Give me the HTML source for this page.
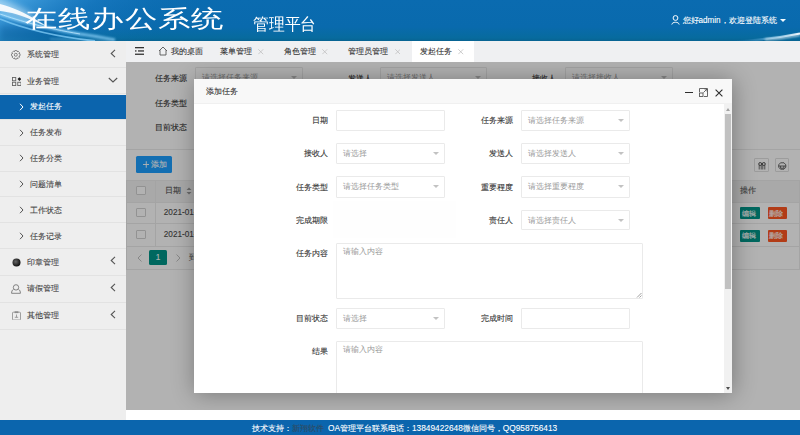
<!DOCTYPE html>
<html><head><meta charset="utf-8">
<style>
*{margin:0;padding:0;box-sizing:border-box}
html,body{width:800px;height:435px;overflow:hidden;background:#fff;font-family:"Liberation Sans",sans-serif;color:#333}
.a{position:absolute;white-space:nowrap}
.t{font-size:8.2px;line-height:10px;-webkit-text-stroke:0.1px currentColor}
#header{position:absolute;left:0;top:0;width:800px;height:41px;overflow:hidden;
  background:linear-gradient(180deg,#0a6bb0 0%,#096aad 65%,#076b9e 92%,#076392 100%)}
#tabs{position:absolute;left:126px;top:41px;width:674px;height:21px;background:#eff0f2}
#side{position:absolute;left:0;top:41px;width:126px;height:379px;background:#eeeeee}
#content{position:absolute;left:126px;top:62px;width:674px;height:348px;background:#fff;overflow:hidden}
#shade{position:absolute;left:0;top:0;width:674px;height:348px;background:rgba(0,0,0,0.3)}
#footer{position:absolute;left:0;top:420px;width:800px;height:15px;background:#0b65ad}
#modal{position:absolute;left:68px;top:17px;width:538px;height:313.5px;background:#fff;box-shadow:1px 1px 22px rgba(0,0,0,.33);overflow:hidden}
.sel{position:absolute;height:21px;border:1px solid #eaeaea;background:#fff;border-radius:1px}
.sel .ph{position:absolute;left:6px;top:5px;font-size:8.2px;line-height:10px;color:#999;white-space:nowrap}
.sel .ar{position:absolute;right:5px;top:8px;width:0;height:0;border-left:3.3px solid transparent;border-right:3.3px solid transparent;border-top:3.5px solid #c2c2c2}
.lbl{position:absolute;font-size:8.2px;line-height:10px;color:#333;white-space:nowrap;text-align:right;-webkit-text-stroke:0.1px currentColor}
.srow{position:absolute;left:0;width:126px;height:26px}
.sline{position:absolute;left:0;width:126px;height:1px;background:#e2e2e2}
.stext{position:absolute;font-size:8.2px;line-height:10px;color:#444;white-space:nowrap;-webkit-text-stroke:0.1px currentColor}
</style></head><body>

<!-- HEADER -->
<div id="header">
  <svg width="800" height="41" style="position:absolute;left:0;top:0">
    <defs>
      <linearGradient id="lg1" x1="0" y1="0" x2="1" y2="0.3">
        <stop offset="0" stop-color="#5ab4ee" stop-opacity="0.85"/>
        <stop offset="0.45" stop-color="#2a8ad4" stop-opacity="0.35"/>
        <stop offset="1" stop-color="#0b68ad" stop-opacity="0"/>
      </linearGradient>
      <linearGradient id="lg2" x1="0" y1="0" x2="1" y2="0">
        <stop offset="0" stop-color="#0b68ad" stop-opacity="0"/>
        <stop offset="0.6" stop-color="#8fd0f5" stop-opacity="0.6"/>
        <stop offset="1" stop-color="#ffffff" stop-opacity="0.95"/>
      </linearGradient>
      <linearGradient id="lg3" x1="0" y1="0" x2="1" y2="0">
        <stop offset="0" stop-color="#ffffff" stop-opacity="0.95"/>
        <stop offset="0.5" stop-color="#d8f0ff" stop-opacity="0.7"/>
        <stop offset="1" stop-color="#9fd6f7" stop-opacity="0"/>
      </linearGradient>
      <linearGradient id="lg4" x1="0" y1="0" x2="1" y2="0">
        <stop offset="0" stop-color="#9fd8fa" stop-opacity="0.8"/>
        <stop offset="0.6" stop-color="#7cc4f0" stop-opacity="0.5"/>
        <stop offset="1" stop-color="#7cc4f0" stop-opacity="0"/>
      </linearGradient>
      <filter id="bl1" x="-20%" y="-50%" width="140%" height="200%"><feGaussianBlur stdDeviation="1.2"/></filter>
      <filter id="bl3" x="-50%" y="-100%" width="200%" height="300%"><feGaussianBlur stdDeviation="3"/></filter>
      <filter id="bl2" x="-20%" y="-50%" width="140%" height="200%"><feGaussianBlur stdDeviation="0.5"/></filter>
    </defs>
    <rect x="0" y="0" width="200" height="41" fill="url(#lg1)"/>
    <rect x="0" y="26" width="60" height="15" fill="#06508e" opacity="0.35" filter="url(#bl3)"/>
    <ellipse cx="10" cy="9" rx="28" ry="6" transform="rotate(24 10 9)" fill="#e0f4ff" opacity="0.55" filter="url(#bl3)"/>
    <path d="M0 4 C12 7 24 12 40 22 C50 28 45 26 36 22 C22 15 10 12 0 11 Z" fill="#ffffff" opacity="0.9" filter="url(#bl2)"/>
    <path d="M0 14 C20 21 45 28 80 34 C95 36 105 38 115 40" stroke="#8ed3fa" stroke-width="3.2" fill="none" opacity="0.75" filter="url(#bl1)"/>
    <path d="M0 14 C20 21 45 28 80 34" stroke="#c8ecff" stroke-width="1" fill="none" opacity="0.7" filter="url(#bl2)"/>
    <path d="M0 19 C22 28 50 36 95 41" stroke="#7cc8f4" stroke-width="1.8" fill="none" opacity="0.8" filter="url(#bl2)"/>
    <path d="M50 39 C70 39.5 90 40.5 110 41.5" stroke="#9fdcff" stroke-opacity="0.35" stroke-width="1.5" fill="none" filter="url(#bl1)"/>
    <path d="M730 41.5 C755 40.5 778 38 800 33.5" stroke="url(#lg2)" stroke-width="2.2" fill="none" filter="url(#bl2)"/>
    <path d="M765 39.5 C780 38.5 790 37 800 35" stroke="#ffffff" stroke-opacity="0.85" stroke-width="1.6" fill="none" filter="url(#bl1)"/>
  </svg>
  <div class="a" style="left:25px;top:4.5px;font-size:24px;line-height:28px;color:#fff;letter-spacing:0.6px;transform:scaleX(1.35);transform-origin:0 0">在线办公系统</div>
  <div class="a" style="left:252.5px;top:14px;font-size:16.5px;line-height:20px;color:#fff;transform:scaleX(0.93);transform-origin:0 0">管理平台</div>
  <svg class="a" style="left:671px;top:15px" width="9" height="10" viewBox="0 0 9 10">
    <circle cx="4.5" cy="3" r="2.4" stroke="#fff" stroke-width="1" fill="none"/>
    <path d="M0.8 9.5 C1.2 6.5 7.8 6.5 8.2 9.5" stroke="#fff" stroke-width="1" fill="none"/>
  </svg>
  <div class="a t" style="left:682.5px;top:15.5px;color:#fff;font-size:8.15px">您好admin，欢迎登陆系统</div>
  <div class="a" style="left:780px;top:19.3px;width:0;height:0;border-left:3.2px solid transparent;border-right:3.2px solid transparent;border-top:3.4px solid #f4fbff"></div>
</div>

<!-- TABS -->
<div id="tabs">
  <svg class="a" style="left:9px;top:6.1px" width="9" height="8" viewBox="0 0 9 8">
    <rect x="0" y="0" width="9" height="1.3" fill="#333"/>
    <rect x="3" y="3.3" width="6" height="1.3" fill="#333"/>
    <rect x="0" y="3.3" width="1.5" height="1.3" fill="#333"/>
    <rect x="0" y="6.6" width="9" height="1.3" fill="#333"/>
  </svg>
  <svg class="a" style="left:32px;top:4.5px" width="10" height="10" viewBox="0 0 10 10">
    <path d="M1 5 L5 1 L9 5 M2 4.2 V9 H8 V4.2" stroke="#555" stroke-width="0.9" fill="none"/>
  </svg>
  <div class="a t" style="left:44.5px;top:6px">我的桌面</div>
  <div class="a t" style="left:93.5px;top:6px">菜单管理</div>
  <svg class="a" style="left:132.25px;top:8.2px" width="5.5" height="5.5" viewBox="0 0 5.5 5.5"><path d="M0.3 0.3 L5.2 5.2 M5.2 0.3 L0.3 5.2" stroke="#bdbdbd" stroke-width="0.75"/></svg>
  <div class="a t" style="left:157.5px;top:6px">角色管理</div>
  <svg class="a" style="left:196.00px;top:8.2px" width="5.5" height="5.5" viewBox="0 0 5.5 5.5"><path d="M0.3 0.3 L5.2 5.2 M5.2 0.3 L0.3 5.2" stroke="#bdbdbd" stroke-width="0.75"/></svg>
  <div class="a t" style="left:222px;top:6px">管理员管理</div>
  <svg class="a" style="left:268.50px;top:8.2px" width="5.5" height="5.5" viewBox="0 0 5.5 5.5"><path d="M0.3 0.3 L5.2 5.2 M5.2 0.3 L0.3 5.2" stroke="#bdbdbd" stroke-width="0.75"/></svg>
  <div class="a" style="left:285.8px;top:0;width:62px;height:21px;background:#fff"></div>
  <div class="a t" style="left:293.5px;top:6px">发起任务</div>
  <svg class="a" style="left:332.25px;top:8.2px" width="5.5" height="5.5" viewBox="0 0 5.5 5.5"><path d="M0.3 0.3 L5.2 5.2 M5.2 0.3 L0.3 5.2" stroke="#bdbdbd" stroke-width="0.75"/></svg>
</div>

<!-- SIDEBAR -->
<div id="side">
<div class="sline" style="top:26px"></div>
<div class="sline" style="top:52px"></div>
<div class="sline" style="top:78px"></div>
<div class="sline" style="top:104px"></div>
<div class="sline" style="top:130px"></div>
<div class="sline" style="top:155px"></div>
<div class="sline" style="top:181px"></div>
<div class="sline" style="top:207px"></div>
<div class="sline" style="top:234px"></div>
<div class="sline" style="top:261px"></div>
<div class="sline" style="top:288px"></div>
<div class="a" style="left:0;top:53.5px;width:126px;height:24.5px;background:#0b64ad"></div>
<div class="stext" style="left:26.5px;top:9.4px">系统管理</div>
<svg class="a" style="left:110px;top:7.6px" width="6" height="9" viewBox="0 0 6 9"><path d="M5 0.8 L1.2 4.5 L5 8.2" stroke="#555" stroke-width="1.1" fill="none"/></svg>
<div class="stext" style="left:26.5px;top:35.8px">业务管理</div>
<svg class="a" style="left:108px;top:35.6px" width="10" height="6" viewBox="0 0 10 6"><path d="M0.8 1 L5 5 L9.2 1" stroke="#555" stroke-width="1.1" fill="none"/></svg>
<div class="stext" style="left:26.5px;top:216.8px">印章管理</div>
<svg class="a" style="left:110px;top:215.0px" width="6" height="9" viewBox="0 0 6 9"><path d="M5 0.8 L1.2 4.5 L5 8.2" stroke="#555" stroke-width="1.1" fill="none"/></svg>
<div class="stext" style="left:26.5px;top:243.4px">请假管理</div>
<svg class="a" style="left:110px;top:241.6px" width="6" height="9" viewBox="0 0 6 9"><path d="M5 0.8 L1.2 4.5 L5 8.2" stroke="#555" stroke-width="1.1" fill="none"/></svg>
<div class="stext" style="left:26.5px;top:270.3px">其他管理</div>
<svg class="a" style="left:110px;top:268.5px" width="6" height="9" viewBox="0 0 6 9"><path d="M5 0.8 L1.2 4.5 L5 8.2" stroke="#555" stroke-width="1.1" fill="none"/></svg>
<div class="stext" style="left:30px;top:61.0px;color:#fff">发起任务</div>
<svg class="a" style="left:18.5px;top:61.5px" width="5" height="8" viewBox="0 0 5 8"><path d="M1 0.8 L4 4 L1 7.2" stroke="#fff" stroke-width="1" fill="none"/></svg>
<div class="stext" style="left:30px;top:87.2px;color:#444">任务发布</div>
<svg class="a" style="left:18.5px;top:87.7px" width="5" height="8" viewBox="0 0 5 8"><path d="M1 0.8 L4 4 L1 7.2" stroke="#555" stroke-width="1" fill="none"/></svg>
<div class="stext" style="left:30px;top:112.5px;color:#444">任务分类</div>
<svg class="a" style="left:18.5px;top:113.0px" width="5" height="8" viewBox="0 0 5 8"><path d="M1 0.8 L4 4 L1 7.2" stroke="#555" stroke-width="1" fill="none"/></svg>
<div class="stext" style="left:30px;top:138.5px;color:#444">问题清单</div>
<svg class="a" style="left:18.5px;top:139.0px" width="5" height="8" viewBox="0 0 5 8"><path d="M1 0.8 L4 4 L1 7.2" stroke="#555" stroke-width="1" fill="none"/></svg>
<div class="stext" style="left:30px;top:164.5px;color:#444">工作状态</div>
<svg class="a" style="left:18.5px;top:165.0px" width="5" height="8" viewBox="0 0 5 8"><path d="M1 0.8 L4 4 L1 7.2" stroke="#555" stroke-width="1" fill="none"/></svg>
<div class="stext" style="left:30px;top:190.5px;color:#444">任务记录</div>
<svg class="a" style="left:18.5px;top:191.0px" width="5" height="8" viewBox="0 0 5 8"><path d="M1 0.8 L4 4 L1 7.2" stroke="#555" stroke-width="1" fill="none"/></svg>
<svg class="a" style="left:11.2px;top:9.2px" width="9.6" height="9.6" viewBox="0 0 11 11">
 <circle cx="5.5" cy="5.5" r="1.7" stroke="#666" stroke-width="0.9" fill="none"/>
 <path d="M9.06 3.91 L10.38 4.41 L10.38 6.59 L9.06 7.09 L9.14 6.89 L9.72 8.18 L8.18 9.72 L6.89 9.14 L7.09 9.06 L6.59 10.38 L4.41 10.38 L3.91 9.06 L4.11 9.14 L2.82 9.72 L1.28 8.18 L1.86 6.89 L1.94 7.09 L0.62 6.59 L0.62 4.41 L1.94 3.91 L1.86 4.11 L1.28 2.82 L2.82 1.28 L4.11 1.86 L3.91 1.94 L4.41 0.62 L6.59 0.62 L7.09 1.94 L6.89 1.86 L8.18 1.28 L9.72 2.82 L9.14 4.11 Z" stroke="#666" stroke-width="0.85" fill="none" stroke-linejoin="round"/>
</svg>
<svg class="a" style="left:11.5px;top:35.5px" width="9.5" height="9" viewBox="0 0 9.5 9">
 <rect x="0.45" y="0.45" width="3.3" height="3.3" stroke="#666" stroke-width="0.9" fill="none"/>
 <rect x="0.45" y="5.25" width="3.3" height="3.3" stroke="#666" stroke-width="0.9" fill="none"/>
 <rect x="5.75" y="5.25" width="3.3" height="3.3" stroke="#666" stroke-width="0.9" fill="none"/>
 <path d="M7.4 0.2 L9.3 2.1 L7.4 4 L5.5 2.1 Z" fill="#222"/>
</svg>
<svg class="a" style="left:11.5px;top:216.5px" width="9" height="9" viewBox="0 0 9 9">
 <defs><radialGradient id="rg1" cx="0.4" cy="0.4" r="0.6"><stop offset="0" stop-color="#666"/><stop offset="1" stop-color="#111"/></radialGradient></defs>
 <circle cx="4.5" cy="4.5" r="4" fill="url(#rg1)"/>
</svg>
<svg class="a" style="left:10.8px;top:242.5px" width="10" height="10" viewBox="0 0 10 10">
 <circle cx="5" cy="3.4" r="2.7" stroke="#707070" stroke-width="0.85" fill="none"/>
 <path d="M2.6 5.2 C1.2 6 0.6 7.3 0.6 9.3 H9.4 C9.4 7.3 8.8 6 7.4 5.2" stroke="#707070" stroke-width="0.85" fill="none"/>
</svg>
<svg class="a" style="left:11.8px;top:269.8px" width="9" height="9.5" viewBox="0 0 9 9.5">
 <rect x="0.5" y="1.2" width="8" height="7.8" rx="0.8" stroke="#8c8c8c" stroke-width="0.8" fill="none"/>
 <rect x="2.6" y="0.3" width="3.8" height="1.8" fill="#8c8c8c"/>
 <path d="M4.5 3.5 V6.3 M2.8 6.3 H6.2" stroke="#8c8c8c" stroke-width="0.8" fill="none"/>
</svg>

</div>

<!-- CONTENT -->
<div id="content">
<div class="lbl" style="right:613.25px;top:12.25px">任务来源</div>
<div class="sel" style="left:69.2px;top:4.8px;width:107.50px;height:21.50px"><div class="ph">请选择任务来源</div><div class="ar"></div></div>
<div class="lbl" style="right:428.3px;top:12.25px">发送人</div>
<div class="sel" style="left:253.8px;top:4.8px;width:107.50px;height:21.50px"><div class="ph">请选择发送人</div><div class="ar"></div></div>
<div class="lbl" style="right:244px;top:12.25px">接收人</div>
<div class="sel" style="left:439px;top:4.8px;width:108.25px;height:21.50px"><div class="ph">请选择接收人</div><div class="ar"></div></div>
<div class="lbl" style="right:613.25px;top:36.50px">任务类型</div>
<div class="sel" style="left:69.5px;top:30px;width:107.50px;height:21.00px"><div class="ph">请选择任务类型</div><div class="ar"></div></div>
<div class="lbl" style="right:613.25px;top:60.50px">目前状态</div>
<div class="sel" style="left:69.5px;top:54px;width:107.50px;height:21.00px"><div class="ph">请选择</div><div class="ar"></div></div>
<div class="a" style="left:0;top:87px;width:674px;height:1px;background:#ebebeb"></div>
<div class="a" style="left:9.9px;top:94.4px;width:35.8px;height:16.4px;background:#1e9fff;border-radius:1.5px"></div>
<svg class="a" style="left:16.7px;top:98.5px" width="6.5" height="7" viewBox="0 0 7 7"><path d="M3.5 0 V7 M0 3.5 H7" stroke="#fff" stroke-width="1"/></svg><div class="a t" style="left:25.3px;top:98.1px;color:#fff">添加</div>
<div class="a" style="left:628.3px;top:96.3px;width:14.5px;height:14.2px;border:1px solid #e0e0e0;border-radius:1px"></div>
<div class="a" style="left:648.8px;top:96.3px;width:14.5px;height:14.2px;border:1px solid #e0e0e0;border-radius:1px"></div>
<svg class="a" style="left:631.6px;top:99.8px" width="8" height="8" viewBox="0 0 8 8"><path d="M1.2 7.5 V3 M3.2 7.5 V3 M4.8 7.5 V3 M6.8 7.5 V3" stroke="#333" stroke-width="0.7"/><circle cx="2.2" cy="2" r="1.5" stroke="#333" stroke-width="0.8" fill="#eee"/><circle cx="5.8" cy="2" r="1.5" stroke="#333" stroke-width="0.8" fill="#eee"/></svg>
<svg class="a" style="left:652px;top:99.8px" width="8.5" height="8" viewBox="0 0 8.5 8"><path d="M2.5 0.8 H6 L7.8 2.8 V5.2 L6 7.2 H2.5 L0.7 5.2 V2.8 Z" stroke="#444" stroke-width="0.8" fill="none"/><path d="M0.8 4 H7.8 M2.6 4 V6.2 H5.9 V4" stroke="#444" stroke-width="0.8" fill="none"/></svg>
<div class="a" style="left:0;top:117.7px;width:674px;height:22px;background:#f2f2f2"></div>
<div class="a" style="left:0;top:117.7px;width:674px;height:1px;background:#ebebeb"></div>
<div class="a" style="left:0;top:139.7px;width:674px;height:1px;background:#ebebeb"></div>
<div class="a" style="left:0;top:161.3px;width:674px;height:1px;background:#ebebeb"></div>
<div class="a" style="left:0;top:183.9px;width:674px;height:1px;background:#ebebeb"></div>
<div class="a" style="left:0;top:206.5px;width:674px;height:1px;background:#ebebeb"></div>
<div class="a" style="left:28.5px;top:117.7px;width:1px;height:66.2px;background:#ebebeb"></div>
<div class="a" style="left:74px;top:117.7px;width:1px;height:66.2px;background:#ebebeb"></div>
<div class="a" style="left:0;top:117.7px;width:1px;height:89px;background:#ebebeb"></div>
<div class="a" style="left:672.5px;top:117.7px;width:1px;height:89px;background:#ebebeb"></div>
<div class="a" style="left:9.6px;top:123.6px;width:10px;height:9.5px;border:1px solid #d2d2d2;background:#fff;border-radius:1px"></div>
<div class="a" style="left:9.6px;top:145.5px;width:10px;height:9.5px;border:1px solid #d2d2d2;background:#fff;border-radius:1px"></div>
<div class="a" style="left:9.6px;top:167.5px;width:10px;height:9.5px;border:1px solid #d2d2d2;background:#fff;border-radius:1px"></div>
<div class="a t" style="left:38.5px;top:124.0px;color:#555">日期</div>
<svg class="a" style="left:60px;top:125px" width="6" height="8" viewBox="0 0 6 8"><path d="M3 0.5 L5.5 3 H0.5 Z M0.5 5 H5.5 L3 7.5 Z" fill="#999"/></svg>
<div class="a t" style="left:37.8px;top:146.1px;color:#4a4a4a">2021-01-01</div>
<div class="a t" style="left:37.8px;top:168.0px;color:#4a4a4a">2021-01-01</div>
<div class="a t" style="left:614.3px;top:123.5px;color:#555">操作</div>
<div class="a" style="left:614.3px;top:145.2px;width:19.4px;height:12px;background:#009688;border-radius:1px"></div>
<div class="a" style="left:615.8px;top:146.7px;font-size:7.3px;line-height:9px;color:#fff;-webkit-text-stroke:0.15px #fff">编辑</div>
<div class="a" style="left:641.8px;top:145.2px;width:19.4px;height:12px;background:#ff5722;border-radius:1px"></div>
<div class="a" style="left:643.3px;top:146.7px;font-size:7.3px;line-height:9px;color:#fff;-webkit-text-stroke:0.15px #fff">删除</div>
<div class="a" style="left:614.3px;top:167.6px;width:19.4px;height:12px;background:#009688;border-radius:1px"></div>
<div class="a" style="left:615.8px;top:169.1px;font-size:7.3px;line-height:9px;color:#fff;-webkit-text-stroke:0.15px #fff">编辑</div>
<div class="a" style="left:641.8px;top:167.6px;width:19.4px;height:12px;background:#ff5722;border-radius:1px"></div>
<div class="a" style="left:643.3px;top:169.1px;font-size:7.3px;line-height:9px;color:#fff;-webkit-text-stroke:0.15px #fff">删除</div>
<svg class="a" style="left:10.5px;top:192px" width="5" height="8" viewBox="0 0 5 8"><path d="M4.5 0.5 L1 4 L4.5 7.5" stroke="#bbb" stroke-width="0.9" fill="none"/></svg>
<div class="a" style="left:23.2px;top:188px;width:17.8px;height:15px;background:#009688;border-radius:1.5px"></div>
<div class="a t" style="left:29.8px;top:191.0px;color:#fff">1</div>
<svg class="a" style="left:50px;top:192px" width="5" height="8" viewBox="0 0 5 8"><path d="M0.5 0.5 L4 4 L0.5 7.5" stroke="#bbb" stroke-width="0.9" fill="none"/></svg>
<div class="a t" style="left:63px;top:191.0px;color:#666">到第</div>
<div id="shade"></div>
<!-- MODAL -->
<div id="modal">
<div class="a" style="left:0;top:0;width:538px;height:25px;background:#f8f8f8;border-bottom:1px solid #f0f0f0"></div>
<div class="a t" style="left:11.5px;top:7.5px;color:#333">添加任务</div>
<div class="a" style="left:491px;top:12.6px;width:8px;height:1.4px;background:#2e2e2e"></div>
<svg class="a" style="left:505px;top:9px" width="9" height="9" viewBox="0 0 9 9">
 <path d="M0.5 4 V0.5 H8.5 V8.5 H5" stroke="#555" stroke-width="0.9" fill="none"/>
 <rect x="0.5" y="5" width="3.5" height="3.5" stroke="#555" stroke-width="0.9" fill="none"/>
 <path d="M4.5 4.5 L8 1 M5.5 1 H8 V3.5" stroke="#555" stroke-width="0.9" fill="none"/>
</svg>
<svg class="a" style="left:520.5px;top:9.5px" width="8" height="8" viewBox="0 0 8 8">
 <path d="M0.6 0.6 L7.4 7.4 M7.4 0.6 L0.6 7.4" stroke="#2e2e2e" stroke-width="1.1" fill="none"/>
</svg>
<div class="a" style="left:529.5px;top:24px;width:8.5px;height:290px;background:#f1f1f1"></div>
<div class="a" style="left:530.5px;top:35px;width:6.5px;height:175px;background:#c1c1c1"></div>
<div class="a" style="left:531.5px;top:28.5px;width:0;height:0;border-left:2.5px solid transparent;border-right:2.5px solid transparent;border-bottom:3px solid #a3a3a3"></div>
<div class="a" style="left:531.5px;top:307.5px;width:0;height:0;border-left:2.5px solid transparent;border-right:2.5px solid transparent;border-top:3px solid #505050"></div>
<div class="lbl" style="right:404.40px;top:37.20px">日期</div>
<div class="sel" style="left:142.3px;top:31.3px;width:108.50px;height:20.70px"></div>
<div class="lbl" style="right:219.00px;top:37.20px">任务来源</div>
<div class="sel" style="left:327.2px;top:31.3px;width:108.50px;height:20.70px"><div class="ph">请选择任务来源</div><div class="ar"></div></div>
<div class="lbl" style="right:404.40px;top:70.30px">接收人</div>
<div class="sel" style="left:142.3px;top:64.2px;width:108.50px;height:21.20px"><div class="ph">请选择</div><div class="ar"></div></div>
<div class="lbl" style="right:219.00px;top:70.30px">发送人</div>
<div class="sel" style="left:327.2px;top:64.2px;width:108.50px;height:21.20px"><div class="ph">请选择发送人</div><div class="ar"></div></div>
<div class="lbl" style="right:404.40px;top:103.50px">任务类型</div>
<div class="sel" style="left:142.3px;top:97.3px;width:108.50px;height:21.40px"><div class="ph">请选择任务类型</div><div class="ar"></div></div>
<div class="lbl" style="right:219.00px;top:103.50px">重要程度</div>
<div class="sel" style="left:327.2px;top:97.3px;width:108.50px;height:21.40px"><div class="ph">请选择重要程度</div><div class="ar"></div></div>
<div class="a" style="left:138.5px;top:122px;width:123.5px;height:36.5px;background:#fefefe"></div>
<div class="lbl" style="right:404.40px;top:136.50px">完成期限</div>
<div class="lbl" style="right:219.00px;top:136.50px">责任人</div>
<div class="sel" style="left:327.2px;top:130.5px;width:108.50px;height:20.90px"><div class="ph">请选择责任人</div><div class="ar"></div></div>
<div class="sel" style="left:142.3px;top:163.5px;width:307.0px;height:56.8px"><div class="ph" style="top:3.2px">请输入内容</div><svg style="position:absolute;right:0.5px;bottom:0.5px" width="6" height="6" viewBox="0 0 6 6"><path d="M5.5 1 L1 5.5 M5.5 3.5 L3.5 5.5" stroke="#777" stroke-width="0.7"/></svg></div>
<div class="lbl" style="right:404.40px;top:169.50px">任务内容</div>
<div class="lbl" style="right:404.40px;top:235.10px">目前状态</div>
<div class="sel" style="left:142.3px;top:229px;width:108.50px;height:21.00px"><div class="ph">请选择</div><div class="ar"></div></div>
<div class="lbl" style="right:219.00px;top:235.10px">完成时间</div>
<div class="sel" style="left:327.2px;top:229.2px;width:108.50px;height:21.10px"></div>
<div class="sel" style="left:142.3px;top:262.3px;width:307.0px;height:60px"><div class="ph" style="top:3.2px">请输入内容</div></div>
<div class="lbl" style="right:404.40px;top:268.30px">结果</div>
</div>


</div>

<!-- FOOTER -->
<div id="footer">
  <div class="a t" style="left:251.5px;top:3px;color:#fff;font-size:8.3px">技术支持：<span style="color:#2f4b62;margin-left:0.5px">新翔软件</span><span style="margin-left:4px">OA管理平台</span>联系电话：13849422648微信同号，QQ958756413</div>
</div>

</body></html>
